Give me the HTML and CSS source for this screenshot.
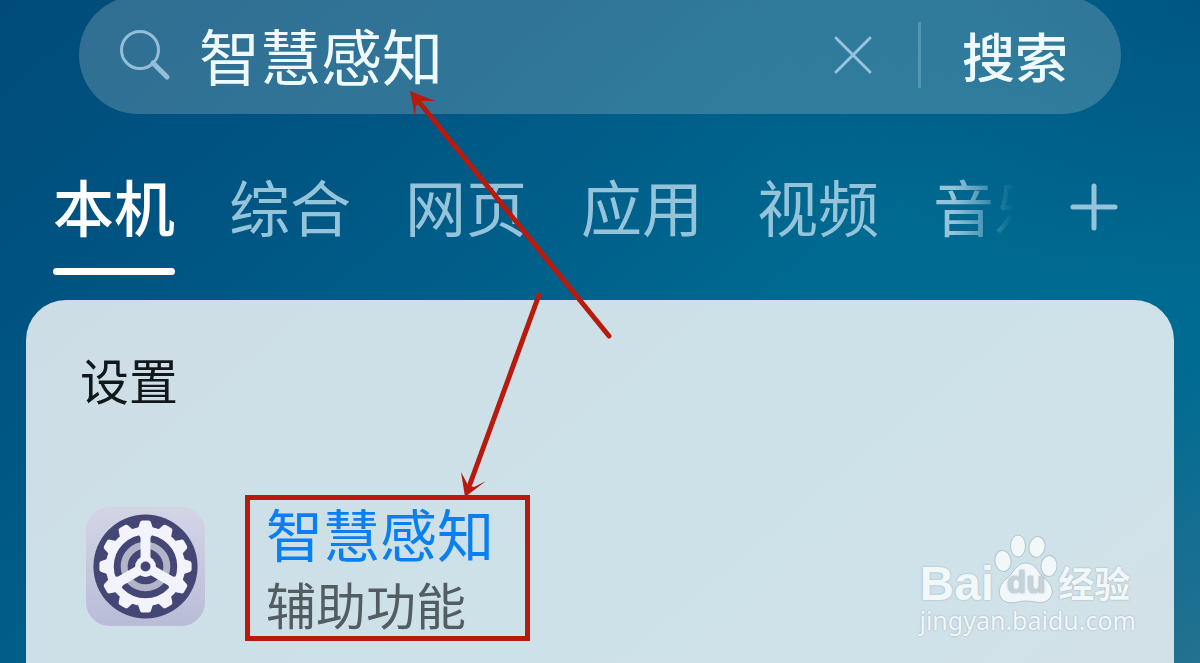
FILE: index.html
```
<!DOCTYPE html>
<html lang="zh-CN">
<head>
  <meta charset="UTF-8">
  <meta name="viewport" content="width=device-width, initial-scale=1.0">
  <title>智慧感知</title>
  <link rel="stylesheet" href="styles.css">
</head>
<body>

  <!-- Search bar -->
  <form class="search" role="search">
    <svg class="search-icon" viewBox="0 0 52 52" aria-hidden="true">
      <circle cx="21" cy="21" r="18.5"/>
      <path class="handle" d="M34 34L48 48"/>
    </svg>
    <input class="search-input" type="text" aria-label="搜索内容" value="智慧感知">
    <button class="clear" type="button" aria-label="清除">
      <svg viewBox="0 0 40 40"><path d="M3 3L37 37M37 3L3 37"/></svg>
    </button>
    <button class="submit" type="submit">搜索</button>
  </form>

  <!-- Category tabs -->
  <nav class="tabs">
    <div class="tab-list">
      <button class="tab active" type="button">本机</button>
      <button class="tab" type="button">综合</button>
      <button class="tab" type="button">网页</button>
      <button class="tab" type="button">应用</button>
      <button class="tab" type="button">视频</button>
      <button class="tab" type="button">音乐</button>
    </div>
    <button class="add" type="button" aria-label="添加">
      <svg viewBox="0 0 48 48"><path d="M24 3V45M3 24H45"/></svg>
    </button>
  </nav>

  <!-- Results -->
  <main class="card">
    <h2 class="card-title">设置</h2>
    <a class="result" href="#">
      <svg class="app-icon" viewBox="0 0 120 120" aria-hidden="true">
        <defs>
          <linearGradient id="tile" x1="0" y1="0" x2="0" y2="1">
            <stop offset="0" stop-color="#d3d5e6"/>
            <stop offset="1" stop-color="#b9bcd6"/>
          </linearGradient>
          <path id="tooth" d="M-8 -37L-5.500 -44.500Q-5 -46.500 -3 -46.500H3Q5 -46.500 5.500 -44.500L8 -37Z"/>
          <path id="spoke" d="M-5 0V-28Q-5 -31 -8 -32V-35H8V-32Q5 -31 5 -28V0Z"/>
        </defs>
        <rect width="120" height="120" rx="24" fill="url(#tile)"/>
        <g transform="translate(60 60)">
          <circle r="52.500" fill="#444776"/>
          <circle r="21.500" fill="none" stroke="#b3b4c8" stroke-width="7"/>
          <circle r="36" fill="none" stroke="#f3f3fb" stroke-width="8"/>
          <g fill="#f3f3fb">
            <use href="#tooth"/>
            <use href="#tooth" transform="rotate(30)"/>
            <use href="#tooth" transform="rotate(60)"/>
            <use href="#tooth" transform="rotate(90)"/>
            <use href="#tooth" transform="rotate(120)"/>
            <use href="#tooth" transform="rotate(150)"/>
            <use href="#tooth" transform="rotate(180)"/>
            <use href="#tooth" transform="rotate(210)"/>
            <use href="#tooth" transform="rotate(240)"/>
            <use href="#tooth" transform="rotate(270)"/>
            <use href="#tooth" transform="rotate(300)"/>
            <use href="#tooth" transform="rotate(330)"/>
            <use href="#spoke"/>
            <use href="#spoke" transform="rotate(120)"/>
            <use href="#spoke" transform="rotate(240)"/>
            <circle r="10.500"/>
          </g>
          <circle r="5" fill="#444776"/>
        </g>
      </svg>
      <span class="result-text">
        <span class="result-name">智慧感知</span>
        <span class="result-path">辅助功能</span>
      </span>
    </a>
  </main>

  <!-- Pointer arrows -->
  <svg class="arrows" width="640" height="520" aria-hidden="true">
    <path class="line" d="M609 336L419 102M539 295L470 484"/>
    <path d="M410 91L435 101L422 101L416 106L415 117ZM465 497L461 472L468 485L474 487L486 481Z"/>
  </svg>

  <!-- Watermark -->
  <div class="watermark">
    <div class="brand">
      <span class="brand-latin">Bai</span>
      <span class="paw">
        <svg viewBox="0 0 64 70" aria-hidden="true">
          <ellipse cx="9" cy="27" rx="8" ry="10.500" transform="rotate(-8 9 27)"/>
          <ellipse cx="24" cy="12" rx="7.500" ry="11"/>
          <ellipse cx="43" cy="13" rx="8" ry="10.500" transform="rotate(12 43 13)"/>
          <ellipse cx="55" cy="32" rx="8" ry="10.500" transform="rotate(4 55 32)"/>
          <path d="M32 29C42 29 43 38 50 44C59 51 61 60 54 66C48 71 40 67 32 67C24 67 17 71 10 67C3 62 4 52 12 45C20 39 22 29 32 29Z"/>
        </svg>
        <span class="du">du</span>
      </span>
      <span class="brand-cn">经验</span>
    </div>
    <div class="site">jingyan.baidu.com</div>
  </div>

</body>
</html>
```
FILE: styles.css
```
/* ===== tokens ===== */
:root{
  --muted:#94c3da;
  --red:#b81b0e;
}

/* ===== base ===== */
*{box-sizing:border-box;}
html{height:100%;}
body{
  margin:0;min-height:100%;position:relative;overflow:hidden;
  display:flex;flex-direction:column;
  font-family:"Noto Sans CJK SC",sans-serif;
  background:
    radial-gradient(ellipse 40% 45% at 100% 0%,#005683 0%,rgba(0,86,131,0) 100%),
    linear-gradient(140deg,#004b7a 0%,#005885 30%,#006a91 58%,#006b92 82%,#257190 100%);
}
button{
  margin:0;padding:0;border:0;background:none;color:inherit;
  font-family:inherit;cursor:pointer;
}
svg{display:block;}

/* ===== search bar ===== */
.search{
  display:flex;align-items:center;
  height:118px;margin:-4px 79px 0;padding:0 53px 0 40px;
  border-radius:59px;background:rgba(160,190,200,.3);
}
.search-icon{
  width:52px;height:52px;flex:none;
  fill:none;stroke:#94bdd6;stroke-width:3;stroke-linecap:round;
}
.search-icon .handle{stroke-width:5;}
.search-input{
  flex:1;min-width:0;margin-left:28px;padding:0;
  border:0;outline:0;background:none;color:#effaff;
  font-family:inherit;font-size:61px;line-height:88px;
}
.clear svg{
  width:40px;height:40px;
  fill:none;stroke:#94c3de;stroke-width:3;stroke-linecap:round;
}
.submit{
  display:flex;align-items:center;
  margin-left:45px;color:#effaff;
  font-size:53px;line-height:76px;font-weight:500;
}
.submit::before{
  content:'';width:3px;height:66px;margin-right:41px;
  background:#5495b4;
}

/* ===== tabs ===== */
.tabs{
  display:flex;justify-content:space-between;
  margin:48px 82px 25px 53px;
}
.tab-list{
  display:flex;gap:54px;flex:1;min-width:0;overflow:hidden;
  margin-right:56px;
  -webkit-mask-image:linear-gradient(to right,#000 calc(100% - 60px),transparent);
  mask-image:linear-gradient(to right,#000 calc(100% - 60px),transparent);
}
.tab{
  flex:none;color:var(--muted);
  font-size:61px;line-height:88px;
}
.tab::after{
  content:'';display:block;height:7px;margin-top:18px;border-radius:4px;
}
.tab.active{color:#fff;font-weight:500;}
.tab.active::after{background:#fff;}
.add{height:90px;}
.add svg{
  width:48px;height:48px;
  fill:none;stroke:var(--muted);stroke-width:5;stroke-linecap:round;
}

/* ===== results card ===== */
.card{
  flex:1;margin:0 26px;padding:47px 54px 22px;
  border-radius:40px 40px 0 0;
  background:linear-gradient(140deg,#cddde6,#cde1e8 50%,#cfe2e9 80%,#d3e1e7);
}
.card-title{
  margin:0 0 84px;color:#10181c;
  font-size:49px;line-height:64px;font-weight:400;
}
.result{
  display:flex;align-items:flex-start;gap:40px;
  margin-left:6px;color:inherit;text-decoration:none;
}
.app-icon{width:119px;height:119px;flex:none;margin-top:12px;}
.result-text{
  display:flex;flex-direction:column;gap:6px;
  padding:0 31px 0 16px;border:5px solid var(--red);
}
.result-name{color:#0a7ff2;font-size:57px;line-height:64px;}
.result-path{color:#525c61;font-size:50px;line-height:66px;}

/* ===== arrows ===== */
.arrows{
  position:absolute;top:0;left:0;
  fill:var(--red);pointer-events:none;
}
.arrows .line{stroke:var(--red);stroke-width:5;stroke-linecap:round;}

/* ===== watermark ===== */
.watermark{
  position:absolute;right:64px;bottom:27px;
  color:#f2f7fa;text-shadow:0 0 2px #93a6b0;
}
.brand{display:flex;align-items:flex-end;height:74px;}
.brand-latin{
  font-family:"Liberation Sans",sans-serif;
  font-size:48px;line-height:40px;font-weight:700;
}
.paw{position:relative;width:64px;}
.paw svg{
  width:64px;height:70px;overflow:visible;
  fill:#f2f7fa;stroke:#b4c5cd;stroke-width:1;
}
.du{
  position:absolute;left:0;right:0;bottom:6px;
  color:#c4d2d9;text-align:center;
  font-family:"Liberation Sans",sans-serif;
  font-size:32px;line-height:32px;font-weight:700;
}
.brand-cn{font-size:36px;line-height:44px;font-weight:700;}
.site{
  font-family:"Noto Sans",sans-serif;
  font-size:25px;line-height:32px;
}
```
